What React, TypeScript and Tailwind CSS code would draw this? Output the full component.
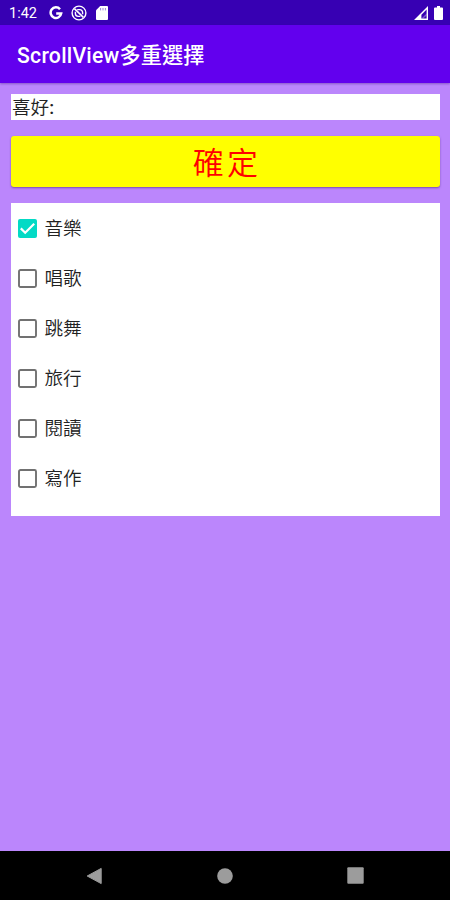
import { useState } from 'react';

const HOBBIES = ['音樂', '唱歌', '跳舞', '旅行', '閱讀', '寫作'];

export default function App() {
  const [checked, setChecked] = useState<string[]>(['音樂']);

  const toggle = (name: string) => {
    setChecked((prev) =>
      prev.includes(name) ? prev.filter((item) => item !== name) : [...prev, name]
    );
  };

  return (
    <div className="flex h-[900px] w-[450px] flex-col overflow-hidden bg-[#bb86fc] font-[Roboto,'Noto_Sans_CJK_TC',sans-serif]">
      <StatusBar />
      <header className="flex h-[58px] shrink-0 items-center bg-[#6200ee] pt-[3px] pl-[17px] shadow-[0_1px_2px_rgba(60,20,120,0.4)]">
        <h1 className="text-[21.2px] leading-none font-medium text-white">
          <span className="tracking-[0.25px]">ScrollView</span>多重選擇
        </h1>
      </header>

      <main className="flex flex-1 flex-col pt-[11px] pr-[10px] pl-[11px]">
        <div className="flex h-[26px] items-center bg-white pt-[2px] pl-px text-[18.6px] leading-none font-[350] text-[#222]">
          喜好<span className="font-medium">:</span>
        </div>
        <button className="mt-4 flex h-[51px] items-center justify-center rounded-[3px] bg-[#ff0] pt-[3px] pl-[3px] text-[31px] leading-none font-[350] tracking-[3.2px] text-[#ff0000] shadow-[0_1px_2px_rgba(60,20,100,0.5)]">
          確定
        </button>
        <div className="mt-4 flex h-[313px] flex-col bg-white">
          {HOBBIES.map((name) => (
            <HobbyRow
              key={name}
              name={name}
              checked={checked.includes(name)}
              onToggle={() => toggle(name)}
            />
          ))}
        </div>
      </main>

      <NavigationBar />
    </div>
  );
}

function HobbyRow({
  name,
  checked,
  onToggle,
}: {
  name: string;
  checked: boolean;
  onToggle: () => void;
}) {
  return (
    <button
      role="checkbox"
      aria-checked={checked}
      className="flex h-[50px] items-center pl-[7px] text-left"
      onClick={onToggle}
    >
      <svg width="19" height="19" viewBox="0 0 19 19" fill="none">
        {checked ? (
          <>
            <rect width="19" height="19" rx="2" fill="#03dac5" />
            <path d="M2.8 9.4 7.2 13.7 16.2 4.8" stroke="#fff" strokeWidth="2.2" />
          </>
        ) : (
          <rect x="1" y="1" width="17" height="17" rx="1.5" stroke="#717171" strokeWidth="1.9" />
        )}
      </svg>
      <span className="ml-[7.5px] pt-[2px] text-[18.6px] leading-none font-[350] text-[#222]">{name}</span>
    </button>
  );
}

function StatusBar() {
  return (
    <div className="flex h-[25px] shrink-0 items-center bg-[#3700b3] pt-px pr-[7px] pl-[9px] text-white">
      <span className="w-[40px] pt-[2px] text-[14.5px] leading-none">1:42</span>
      {/* G */}
      <svg width="14" height="14" viewBox="0 0 14 14" fill="none">
        <path d="M11 3.2A5.3 5.3 0 1 0 12.2 7.4H7.2" stroke="#fff" strokeWidth="2.5" />
      </svg>
      {/* 勿擾 */}
      <svg className="ml-[8px]" width="16" height="16" viewBox="0 0 16 16" fill="none" stroke="#fff">
        <circle cx="8" cy="8" r="6.9" strokeWidth="1.4" />
        <path d="M3.4 3.6 12.4 12.4" strokeWidth="1.6" />
        <path d="M6.2 4.6h2.6a2.8 2.8 0 0 1 2.8 2.8v1.8M9.4 11.4H7.2a2.8 2.8 0 0 1-2.8-2.8V6.8" strokeWidth="1.4" />
      </svg>
      {/* SD */}
      <svg className="ml-[9px]" width="12" height="14" viewBox="0 0 12 14">
        <path d="M4.2 0H11a1 1 0 0 1 1 1v12a1 1 0 0 1-1 1H1a1 1 0 0 1-1-1V4.2Z" fill="#fff" />
        <path d="M4.6 2v2.4M7 2v2.4M9.4 2v2.4" stroke="#3700b3" strokeWidth="0.7" opacity="0.7" />
      </svg>
      <svg className="ml-auto" width="14" height="14" viewBox="0 0 14 14">
        <path
          fillRule="evenodd"
          d="M14 0V14H0ZM12.6 3.6 7.4 8.8V12.6H12.6Z"
          fill="#fff"
        />
        <path d="M7.4 12.6 12.6 7.4V9.4L9.4 12.6Z" fill="#fff" opacity="0.35" />
      </svg>
      <svg className="ml-[6px]" width="9" height="14" viewBox="0 0 9 14">
        <path d="M3 0h3v1.5h2a1 1 0 0 1 1 1V13a1 1 0 0 1-1 1H1a1 1 0 0 1-1-1V2.5a1 1 0 0 1 1-1h2Z" fill="#fff" />
      </svg>
    </div>
  );
}

function NavigationBar() {
  return (
    <nav className="flex h-[49px] shrink-0 items-center justify-between bg-black pr-[86px] pl-[86px]">
      <svg width="17" height="18" viewBox="0 0 17 18">
        <path d="M15.2 1.4v15.2L1.2 9Z" fill="#9c9c9c" stroke="#9c9c9c" strokeLinejoin="round" />
      </svg>
      <svg width="16" height="16" viewBox="0 0 16 16">
        <circle cx="8" cy="8" r="7.8" fill="#9c9c9c" />
      </svg>
      <svg width="17" height="17" viewBox="0 0 17 17">
        <rect x="0.3" y="0.3" width="16.4" height="16.4" rx="1" fill="#9c9c9c" />
      </svg>
    </nav>
  );
}
